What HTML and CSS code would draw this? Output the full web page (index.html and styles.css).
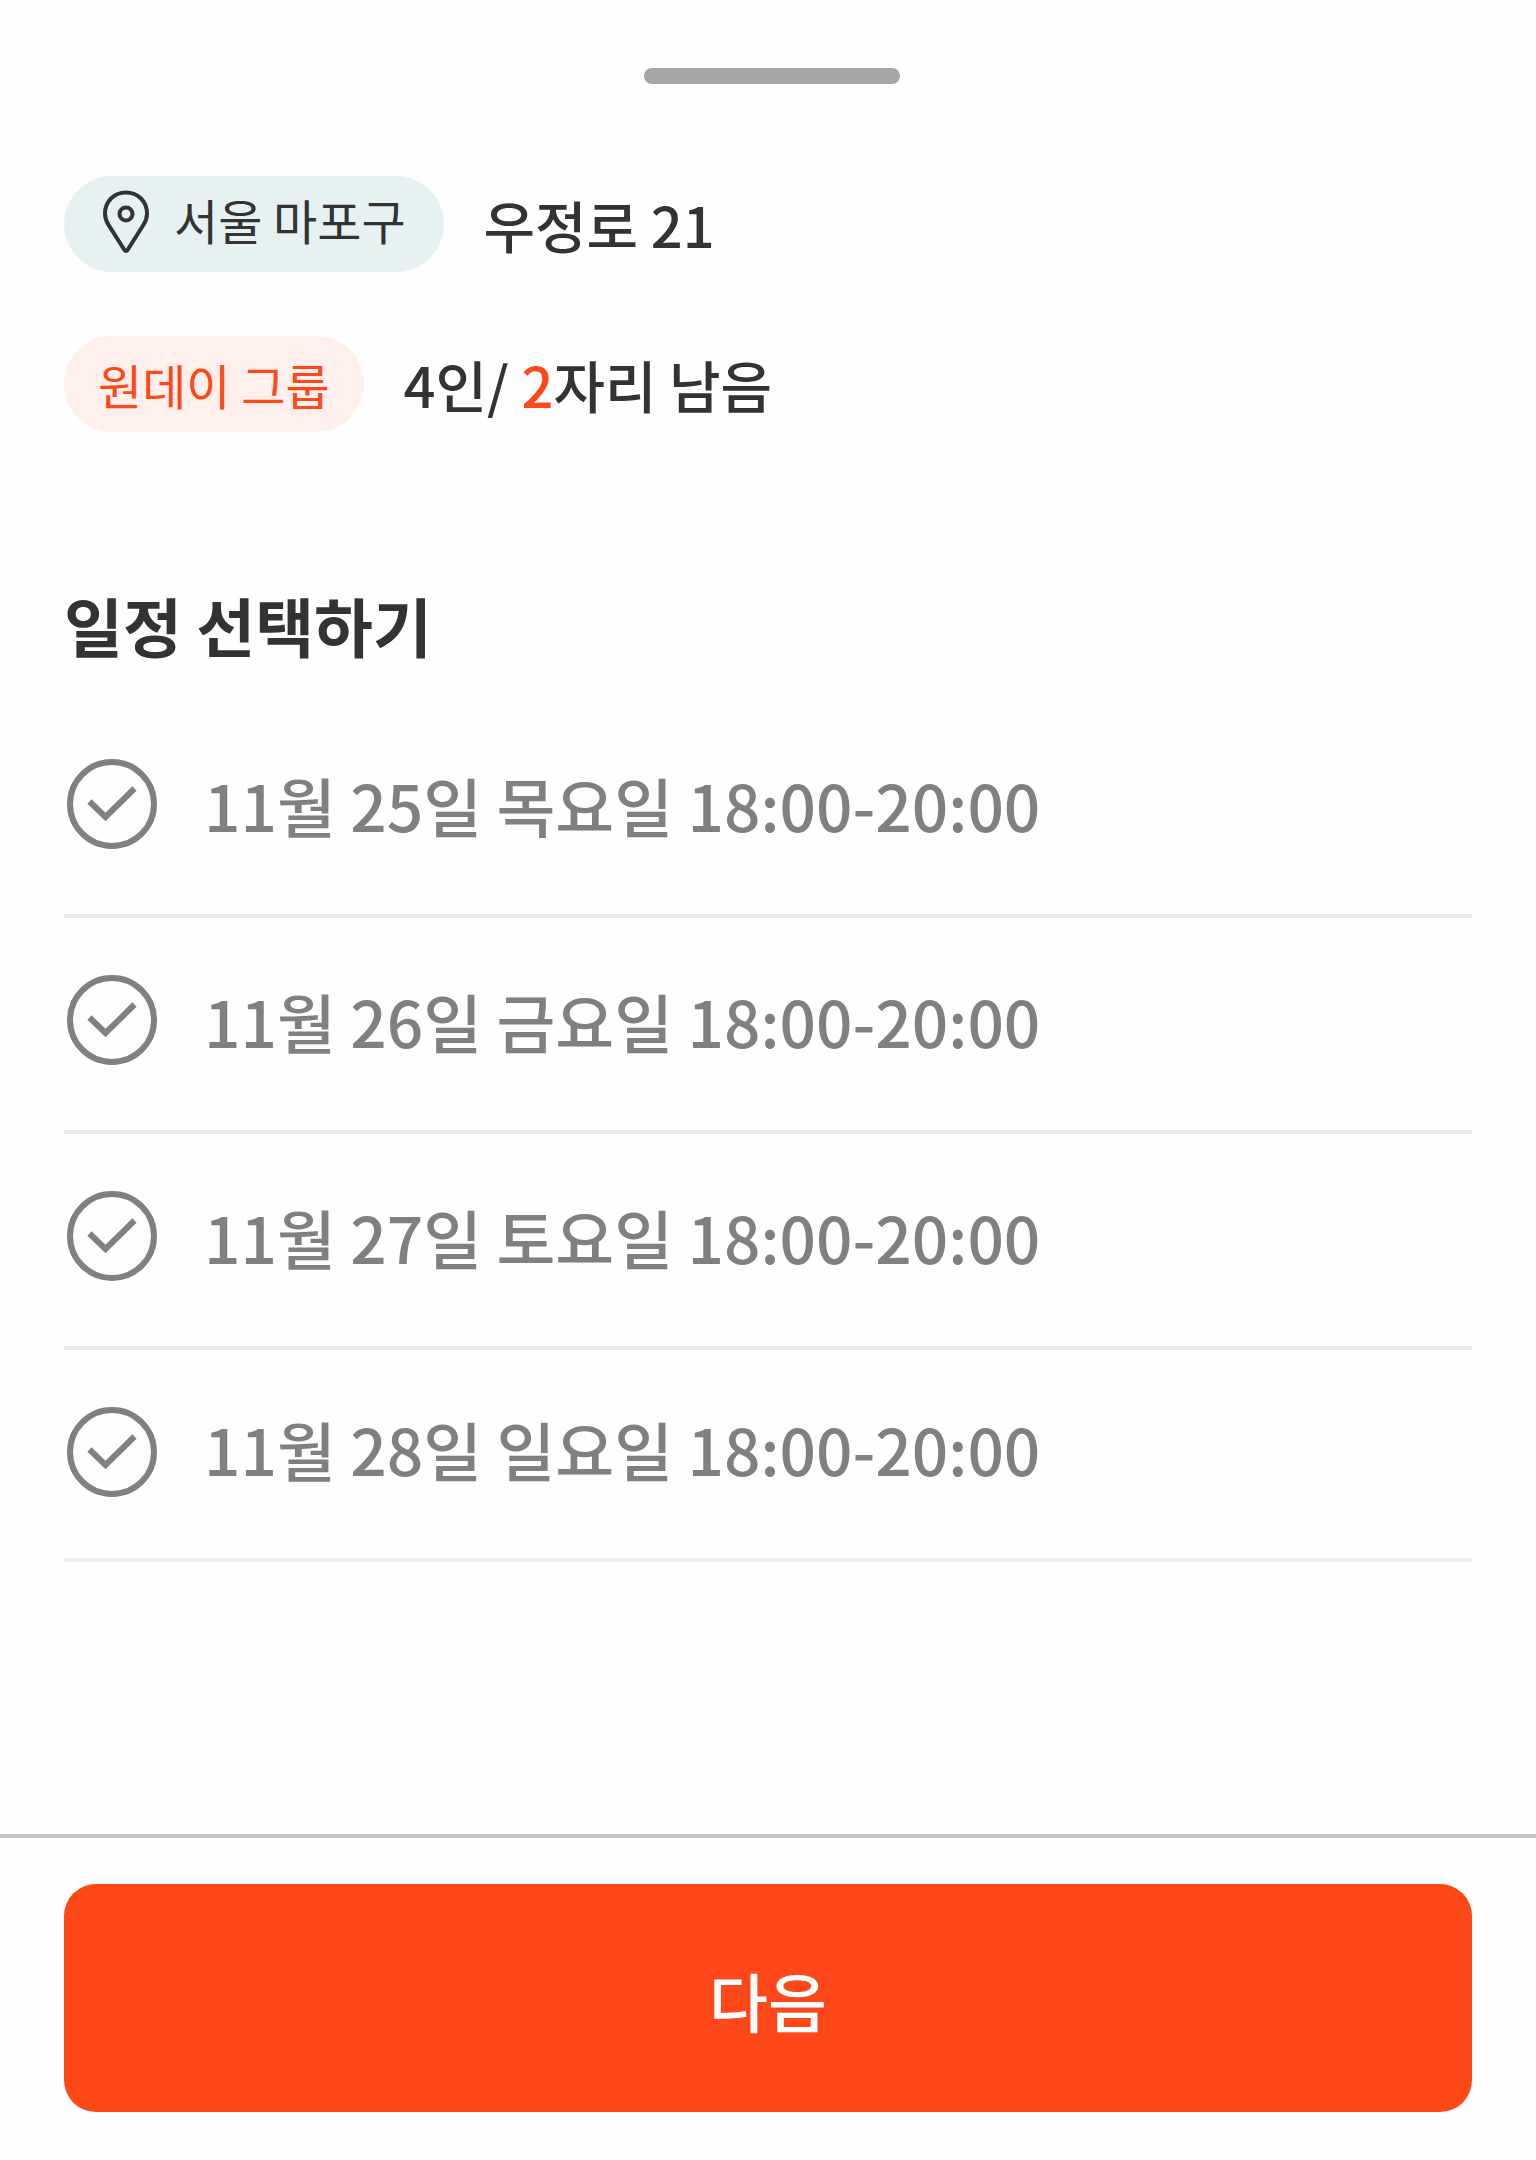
FILE: index.html
```html
<!DOCTYPE html>
<html lang="ko">
<head>
<meta charset="utf-8">
<meta name="viewport" content="width=device-width, initial-scale=1">
<title>일정 선택하기</title>
<link rel="stylesheet" href="styles.css">
</head>
<body>
<form class="sheet">
  <div class="grabber"><span class="grabber-bar"></span></div>
  <main class="content">
    <section class="info">
      <div class="info-row">
        <span class="tag tag-place">
          <svg class="pin" viewBox="0 0 64 64" fill="none" stroke="currentColor" stroke-width="4" stroke-linejoin="round" aria-hidden="true">
            <path d="M32 2.500C20 2.500 11 11.500 11 23.500C11 28 12.200 31.200 14.500 34.800L30.300 59.800Q32 62.200 33.700 59.800L49.500 34.800C51.800 31.200 53 28 53 23.500C53 11.500 44 2.500 32 2.500Z"/>
            <circle cx="32" cy="24" r="6.500"/>
          </svg>
          서울 마포구
        </span>
        <span class="info-text">우정로 21</span>
      </div>
      <div class="info-row">
        <span class="tag tag-group">원데이 그룹</span>
        <span class="info-text">4인/ <em class="accent">2</em>자리 남음</span>
      </div>
    </section>
    <fieldset class="schedule">
      <legend class="title">일정 선택하기</legend>
      <label class="slot">
        <input class="slot-input" type="radio" name="slot" value="25">
        <svg class="check" viewBox="0 0 96 96" fill="none" stroke="currentColor" aria-hidden="true"><circle cx="48" cy="48" r="42" stroke-width="6"/><path d="M25.500 45.500L41.500 61L70.500 32.500" stroke-width="6"/></svg>
        <span>11월 25일 목요일 18:00-20:00</span>
      </label>
      <label class="slot">
        <input class="slot-input" type="radio" name="slot" value="26">
        <svg class="check" viewBox="0 0 96 96" fill="none" stroke="currentColor" aria-hidden="true"><circle cx="48" cy="48" r="42" stroke-width="6"/><path d="M25.500 45.500L41.500 61L70.500 32.500" stroke-width="6"/></svg>
        <span>11월 26일 금요일 18:00-20:00</span>
      </label>
      <label class="slot">
        <input class="slot-input" type="radio" name="slot" value="27">
        <svg class="check" viewBox="0 0 96 96" fill="none" stroke="currentColor" aria-hidden="true"><circle cx="48" cy="48" r="42" stroke-width="6"/><path d="M25.500 45.500L41.500 61L70.500 32.500" stroke-width="6"/></svg>
        <span>11월 27일 토요일 18:00-20:00</span>
      </label>
      <label class="slot slot-last">
        <input class="slot-input" type="radio" name="slot" value="28">
        <svg class="check" viewBox="0 0 96 96" fill="none" stroke="currentColor" aria-hidden="true"><circle cx="48" cy="48" r="42" stroke-width="6"/><path d="M25.500 45.500L41.500 61L70.500 32.500" stroke-width="6"/></svg>
        <span>11월 28일 일요일 18:00-20:00</span>
      </label>
    </fieldset>
  </main>
  <footer class="actions">
    <button class="next" type="button">다음</button>
  </footer>
</form>
</body>
</html>
```
FILE: styles.css
```css
* {
  box-sizing: border-box;
}

body {
  margin: 0;
  background: #fefefe;
  color: #333;
  font-family: "Noto Sans CJK JP", "Noto Sans CJK KR", sans-serif;
  font-feature-settings: "locl" 0;
}

.sheet {
  display: flex;
  flex-direction: column;
  min-height: 100vh;
}

.grabber {
  display: flex;
  justify-content: center;
  padding: 68px 0 0 8px;
}

.grabber-bar {
  width: 256px;
  height: 16px;
  border-radius: 8px;
  background: #a6a6a6;
}

.content {
  flex: 1;
  padding: 92px 64px 64px;
}

.info {
  display: flex;
  flex-direction: column;
  gap: 64px;
}

.info-row {
  display: flex;
  align-items: center;
  gap: 40px;
}

.tag {
  display: flex;
  height: 96px;
  border-radius: 48px;
  font-size: 48px;
}

.tag-place {
  gap: 16px;
  padding: 14px 38px 0 30px;
  background: #e6f2f2;
  line-height: 58px;
}

.tag-group {
  padding: 12px 34px 0;
  background: #fff0ed;
  color: #ff481a;
  line-height: 72px;
}

.pin {
  width: 64px;
  height: 64px;
}

.info-text {
  font-size: 56px;
  font-weight: 500;
  line-height: 80px;
}

.accent {
  color: #ff481a;
  font-style: normal;
}

.schedule {
  margin: 144px 0 0;
  padding: 0;
  border: 0;
}

.title {
  margin-bottom: 30px;
  padding: 0;
  font-size: 64px;
  font-weight: 700;
  line-height: 96px;
}

.slot {
  display: flex;
  align-items: flex-start;
  gap: 44px;
  height: 216px;
  padding-top: 54px;
  border-bottom: 4px solid #ebebeb;
  color: #808080;
  font-size: 64px;
  font-weight: 500;
  line-height: 96px;
  cursor: pointer;
}

.slot-last {
  height: 212px;
  line-height: 88px;
}

.slot-input {
  position: absolute;
  opacity: 0;
}

.check {
  width: 96px;
  height: 96px;
}

.slot-input:checked ~ * {
  color: #ff481a;
}

.actions {
  padding: 46px 64px 48px;
  border-top: 4px solid #c7c7c7;
}

.next {
  width: 100%;
  height: 228px;
  padding: 2px 0 0;
  border: 0;
  border-radius: 32px;
  background: #ff481a;
  color: #fff;
  font: inherit;
  font-feature-settings: inherit;
  font-size: 64px;
  font-weight: 500;
  line-height: 96px;
  cursor: pointer;
}
```
